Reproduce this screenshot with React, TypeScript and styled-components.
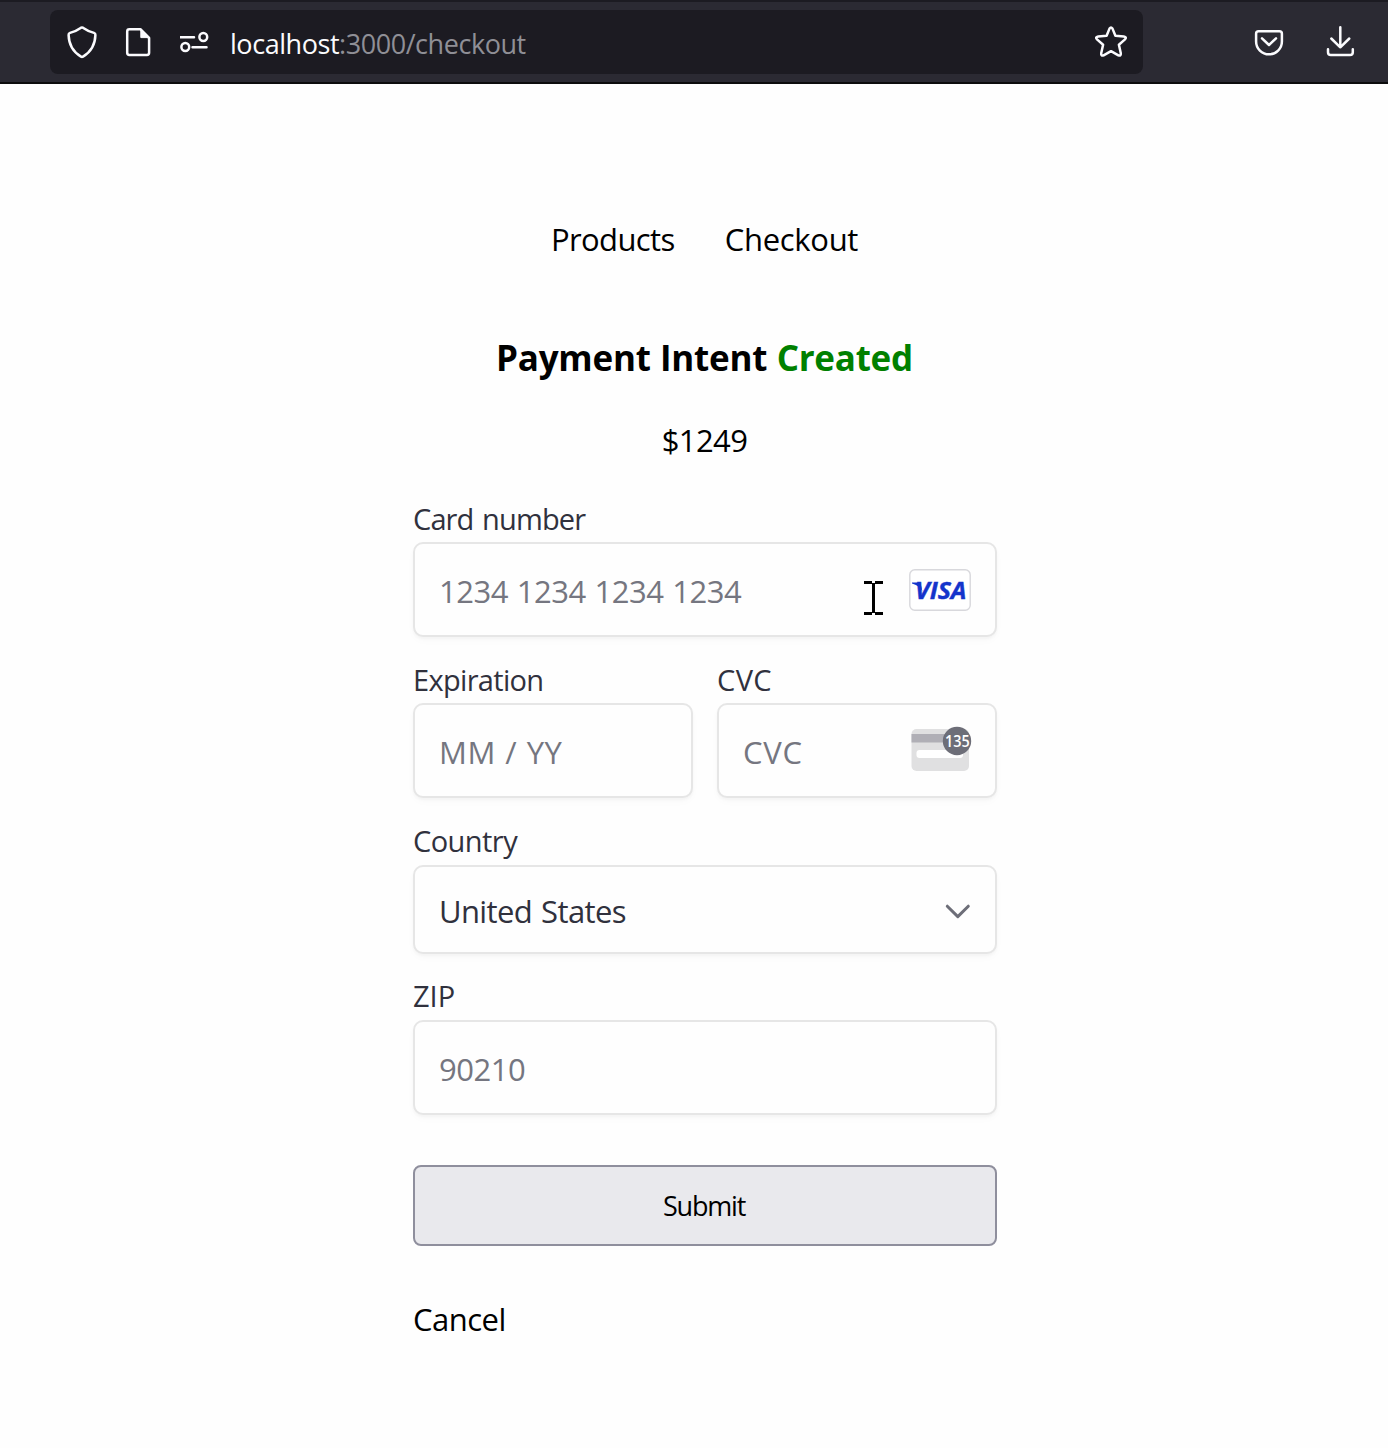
import React from "react";
import styled, { createGlobalStyle } from "styled-components";

const Global = createGlobalStyle`
  *, *::before, *::after { box-sizing: border-box; }
  html, body { margin: 0; padding: 0; background: #fefefe; }
  body { font-family: "Open Sans", "Segoe UI", sans-serif; color: #000; overflow: hidden; }
`;

const Page = styled.div`
  width: 1388px;
  height: 1448px;
  display: flex;
  flex-direction: column;
`;

const Toolbar = styled.header`
  height: 84px;
  display: flex;
  align-items: flex-start;
  padding: 8px 32px 0 50px;
  background: #2b2a33;
  border-top: 2px solid #1c1b22;
  border-bottom: 2px solid #0c0c0d;
`;

const AddressBar = styled.div`
  width: 1093px;
  height: 64px;
  display: flex;
  align-items: center;
  padding: 0 15px 0 16px;
  background: #1c1b22;
  border-radius: 8px;
`;

const BarIcons = styled.div`
  display: flex;
  gap: 26px;
  width: 164px;
  flex: none;
`;

const Actions = styled.div`
  display: flex;
  align-items: center;
  gap: 39px;
  height: 64px;
  margin-left: auto;
`;

const Address = styled.div`
  flex: 1;
  font-size: 27px;
  line-height: 40px;
  padding: 3px 0 0;
  letter-spacing: -0.45px;
  color: #8f8f96;
  white-space: pre;
`;

const Host = styled.span`
  color: #fbfbfe;
`;

const Stroke = styled.svg.attrs({ fill: "none", strokeLinecap: "round", strokeLinejoin: "round" })`
  display: block;
  flex: none;
  stroke: #fbfbfe;
  stroke-width: 2.5;
`;

const Content = styled.main`
  width: 584px;
  margin-left: 413px;
  padding-top: 134px;
  display: flex;
  flex-direction: column;
`;

const Nav = styled.nav`
  display: flex;
  justify-content: center;
  gap: 50px;
  padding-right: 1px;
`;

const TextLink = styled.a<{ $spacing: number }>`
  font-size: 31px;
  line-height: 42px;
  letter-spacing: ${(p) => p.$spacing}px;
  color: #000;
  text-decoration: none;
`;

const Heading = styled.h1`
  margin: 74px 0 0;
  padding-right: 1px;
  font-size: 35px;
  line-height: 48px;
  font-weight: 700;
  letter-spacing: -0.25px;
  word-spacing: 0.6px;
  text-align: center;
  white-space: nowrap;
`;

const Status = styled.span`
  color: #008000;
`;

const Amount = styled.p`
  margin: 37px 0 0;
  padding-right: 1px;
  font-size: 31px;
  line-height: 42px;
  letter-spacing: -0.6px;
  text-align: center;
`;

const Form = styled.form`
  display: flex;
  flex-direction: column;
  gap: 23px;
  margin-top: 38px;
`;

const Row = styled.div`
  display: grid;
  grid-template-columns: 280px 280px;
  gap: 24px;
`;

const Field = styled.label<{ $gap?: number; $lift?: number }>`
  display: flex;
  flex-direction: column;
  gap: ${(p) => p.$gap ?? 3}px;
  margin-top: ${(p) => -(p.$lift ?? 0)}px;
`;

const Label = styled.span<{ $spacing: number }>`
  font-size: 29px;
  line-height: 40px;
  letter-spacing: ${(p) => p.$spacing}px;
  word-spacing: 2px;
  color: #30313d;
`;

const Control = styled.span<{ $height?: number }>`
  position: relative;
  height: ${(p) => p.$height ?? 95}px;
  display: flex;
  align-items: center;
  justify-content: space-between;
  padding: 1px 24px 0;
  border: 2px solid #e6e6e6;
  border-radius: 10px;
  background: #fefefe;
  box-shadow: 0 2px 3px rgba(0, 0, 0, 0.03), 0 4px 8px rgba(0, 0, 0, 0.02);
`;

const Value = styled.span<{ $filled?: boolean; $spacing: number; $wordSpacing?: number }>`
  font-size: 31px;
  line-height: 42px;
  padding-top: 2px;
  letter-spacing: ${(p) => p.$spacing}px;
  word-spacing: ${(p) => p.$wordSpacing ?? 0}px;
  color: ${(p) => (p.$filled ? "#30313d" : "#757680")};
  white-space: nowrap;
`;

const Drawing = styled.svg`
  display: block;
  flex: none;
  overflow: visible;
`;

const CvcDrawing = styled(Drawing)`
  margin: 0 -4px 4px 0;
`;

const ChevronDrawing = styled(Drawing)`
  margin-top: 3px;
`;

const Pointer = styled.svg`
  position: absolute;
  left: 449px;
  top: 37px;
`;

const Submit = styled.button`
  height: 81px;
  margin-top: 27px;
  padding: 0 2px 0 0;
  border: 2px solid #8f8f9d;
  border-radius: 8px;
  background: #e9e9ed;
  font: 400 27px/36px "Open Sans", "Segoe UI", sans-serif;
  letter-spacing: -1.2px;
  color: #000;
`;

const Cancel = styled(TextLink)`
  margin-top: 52px;
`;

const ShieldIcon = () => (
  <Stroke width="32" height="34" viewBox="0 0 32 34">
    <path d="M15.1 2.7Q16 2.2 16.9 2.7Q21.5 6 28 7.9Q29.5 8.4 29.4 10Q29 24.5 17 31.6Q16 32.2 15 31.6Q3 24.5 2.6 10Q2.5 8.4 4 7.9Q10.5 6 15.1 2.7Z" />
  </Stroke>
);

const PageIcon = () => (
  <Stroke width="30" height="34" viewBox="0 0 30 34">
    <path d="M6 4.2H16.4L25.1 13V27.8Q25.1 30 22.9 30H5.4Q3.2 30 3.2 27.8V6.4Q3.2 4.2 5.4 4.2Z" />
    <path d="M16.8 4.6V12.6H24.8Z" fill="#fbfbfe" strokeWidth="1" />
  </Stroke>
);

const PermissionsIcon = () => (
  <Stroke width="32" height="34" viewBox="1.5 0 32 34">
    <path d="M1.8 12.3H15.5M14 22.3H28" />
    <circle cx="24.8" cy="12" r="3.9" />
    <circle cx="6.8" cy="22" r="3.9" />
  </Stroke>
);

const StarIcon = () => (
  <Stroke width="34" height="34" viewBox="0 0 34 34">
    <path d="M15.6 3.4Q17 1.4 18.4 3.4L21.4 10.8L29.8 11.5Q33.2 12.1 31 14.4L24.9 19.7L26.8 28.3Q27.1 31.3 24.4 30.3L17 26.2L9.6 30.3Q6.9 31.3 7.2 28.3L9.1 19.7L3 14.4Q0.8 12.1 4.2 11.5L12.6 10.8Z" />
  </Stroke>
);

const PocketIcon = () => (
  <Stroke width="32" height="34" viewBox="0 0 32 34">
    <path d="M5.6 6.2H26.4Q28.9 6.2 28.9 8.7V16.4A12.9 12.9 0 0 1 3.1 16.4V8.7Q3.1 6.2 5.6 6.2Z" />
    <path d="M9 13.3L16 20L23 13.3" />
  </Stroke>
);

const DownloadIcon = () => (
  <Stroke width="32" height="34" viewBox="0 0 32 34">
    <path d="M16.3 2.3V22.3M7.3 13.5L16.3 22.3L25.3 13.5M4 24.3V27.2Q4 30 6.8 30H26Q28.8 30 28.8 27.2V24.3" />
  </Stroke>
);

const VisaIcon = () => (
  <Drawing width="62" height="42" viewBox="0 0 62 42">
    <rect x="0.8" y="0.8" width="60.4" height="40.4" rx="5" fill="#fff" stroke="#d8d8dc" strokeWidth="1.4" />
    <path d="M3 13.6H9.6Q11.4 13.6 11.8 15.4L13.4 22.4Q10 16.4 3 14.6Z" fill="#1434cb" />
    <text x="6" y="30" textLength="51.5" lengthAdjust="spacingAndGlyphs" fontSize="22.6" fontWeight="700" fontStyle="italic" fill="#1434cb" stroke="#1434cb" strokeWidth="0.4">
      VISA
    </text>
  </Drawing>
);

const CvcIcon = () => (
  <CvcDrawing width="66" height="46" viewBox="0 0 66 46">
    <rect x="2.5" y="3" width="57.5" height="42" rx="5" fill="#e0e0e1" />
    <rect x="2.5" y="8" width="57.5" height="8.5" fill="#b0afb6" />
    <rect x="7.5" y="24" width="46.5" height="8" rx="3" fill="#fff" />
    <circle cx="48" cy="15" r="14.2" fill="#6d6e78" />
    <text x="36" y="20.6" textLength="24.6" lengthAdjust="spacingAndGlyphs" fontSize="16.2" fontWeight="600" fill="#fff">
      135
    </text>
  </CvcDrawing>
);

const ChevronIcon = () => (
  <ChevronDrawing width="26" height="18" viewBox="0 0 26 18">
    <path d="M2.3 3.2L12.8 13.6L23.3 3.2" fill="none" stroke="#6d6e78" strokeWidth="3" strokeLinecap="round" strokeLinejoin="round" />
  </ChevronDrawing>
);

const TextPointer = () => (
  <Pointer width="20" height="36" viewBox="0 0 20 36">
    <path d="M0 0H8V2H11V0H19V3H11V31H19V34H11V32H8V34H0V31H8V3H0Z" fill="#000" />
  </Pointer>
);

export default function App() {
  return (
    <Page>
      <Global />
      <Toolbar>
        <AddressBar>
          <BarIcons>
            <ShieldIcon />
            <PageIcon />
            <PermissionsIcon />
          </BarIcons>
          <Address>
            <Host>localhost</Host>:3000/checkout
          </Address>
          <StarIcon />
        </AddressBar>
        <Actions>
          <PocketIcon />
          <DownloadIcon />
        </Actions>
      </Toolbar>
      <Content>
        <Nav>
          <TextLink $spacing={-0.6}>Products</TextLink>
          <TextLink $spacing={-0.3}>Checkout</TextLink>
        </Nav>
        <Heading>
          Payment Intent <Status>Created</Status>
        </Heading>
        <Amount>$1249</Amount>
        <Form>
          <Field>
            <Label $spacing={-0.88}>Card number</Label>
            <Control>
              <Value $spacing={-0.5} $wordSpacing={1.3}>1234 1234 1234 1234</Value>
              <VisaIcon />
              <TextPointer />
            </Control>
          </Field>
          <Row>
            <Field>
              <Label $spacing={-0.68}>Expiration</Label>
              <Control>
                <Value $spacing={0.6} $wordSpacing={0.7}>MM / YY</Value>
              </Control>
            </Field>
            <Field>
              <Label $spacing={0.4}>CVC</Label>
              <Control>
                <Value $spacing={0.7}>CVC</Value>
                <CvcIcon />
              </Control>
            </Field>
          </Row>
          <Field $gap={4}>
            <Label $spacing={-0.55}>Country</Label>
            <Control $height={89}>
              <Value $filled $spacing={-0.62} $wordSpacing={1.5}>United States</Value>
              <ChevronIcon />
            </Control>
          </Field>
          <Field $gap={4} $lift={1}>
            <Label $spacing={0}>ZIP</Label>
            <Control>
              <Value $spacing={-0.5}>90210</Value>
            </Control>
          </Field>
          <Submit type="button">Submit</Submit>
        </Form>
        <Cancel $spacing={-0.5}>Cancel</Cancel>
      </Content>
    </Page>
  );
}
